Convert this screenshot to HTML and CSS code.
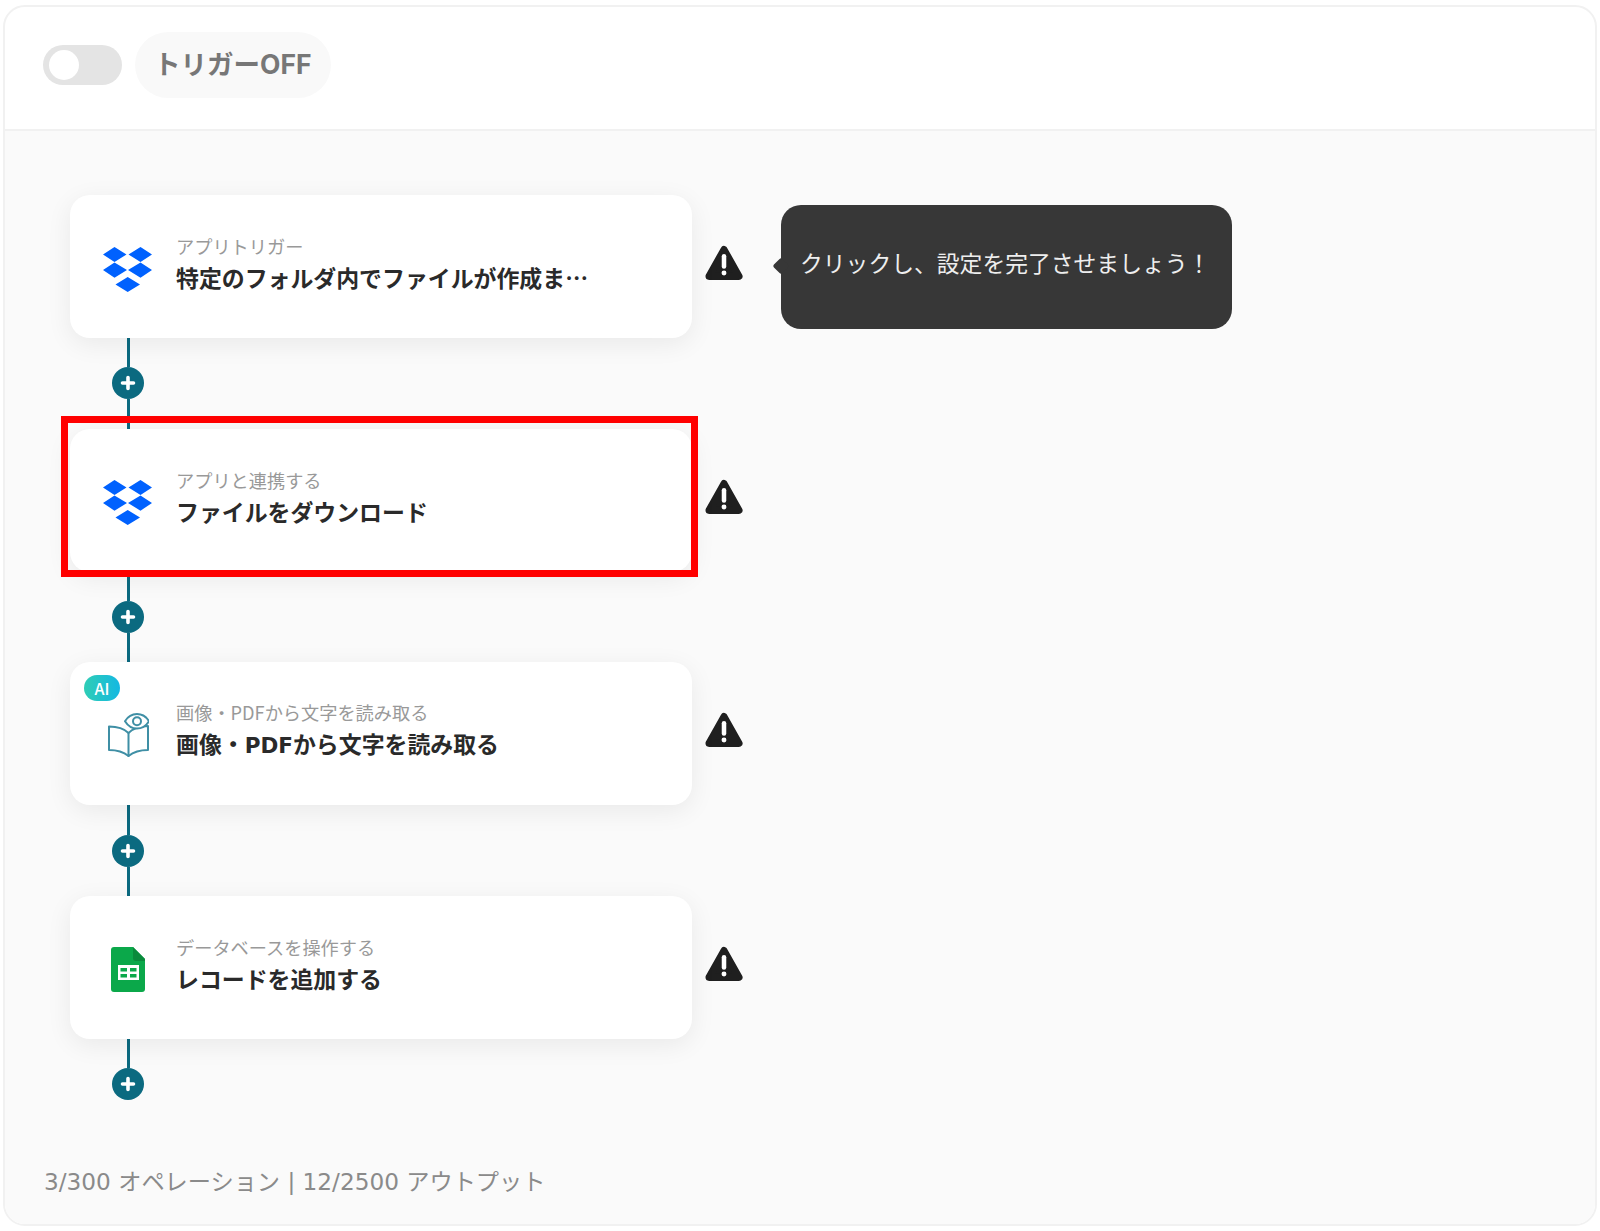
FILE: index.html
```html
<!DOCTYPE html>
<html lang="ja">
<head>
<meta charset="utf-8">
<title>フロー</title>
<link rel="stylesheet" href="styles.css">
</head>
<body>
<svg class="defs" width="0" height="0" aria-hidden="true">
  <symbol id="dropbox" viewBox="0 0 50 45">
    <path d="M11.5 0 L23.5 7.4 L11.5 15 L0 7.4 Z M37.5 0 L49 7.4 L37.5 15 L25.5 7.4 Z M11.5 15.6 L24 23 L11.5 30.7 L0 23 Z M37.5 15.6 L49 23 L37.5 30.7 L25 23 Z M24.7 30 L37 37.6 L24.7 45 L12.5 37.6 Z" fill="#0061fe"/>
  </symbol>
  <symbol id="warn" viewBox="0 0 38 35">
    <path d="M19 4.5 L33.5 30.5 H4.5 Z" fill="#1f1f1f" stroke="#1f1f1f" stroke-width="7" stroke-linejoin="round"/>
    <path d="M19 11 V21" stroke="#fff" stroke-width="4.4" stroke-linecap="round" fill="none"/>
    <circle cx="19" cy="27.2" r="2.4" fill="#fff"/>
  </symbol>
  <symbol id="plus" viewBox="0 0 32 32">
    <circle cx="16" cy="16" r="16" fill="#0b6a80"/>
    <path d="M16 10.5 V21.5 M10.5 16 H21.5" stroke="#fff" stroke-width="3.6" stroke-linecap="round"/>
  </symbol>
</svg>
<main class="frame">
  <header class="topbar">
    <div class="toggle"><span class="knob"></span></div>
    <div class="trigger-pill">トリガーOFF</div>
  </header>
  <section class="canvas">
    <div class="flow">
      <div class="step">
        <div class="card">
          <svg class="icon-dropbox"><use href="#dropbox"/></svg>
          <div class="card-text">
            <div class="card-label">アプリトリガー</div>
            <div class="card-title">特定のフォルダ内でファイルが作成ま…</div>
          </div>
        </div>
        <svg class="warn"><use href="#warn"/></svg>
        <div class="tooltip">クリックし、設定を完了させましょう！</div>
      </div>
      <div class="connector"><span class="line"></span><svg class="plus"><use href="#plus"/></svg><span class="line"></span></div>
      <div class="step">
        <div class="card">
          <svg class="icon-dropbox"><use href="#dropbox"/></svg>
          <div class="card-text">
            <div class="card-label">アプリと連携する</div>
            <div class="card-title">ファイルをダウンロード</div>
          </div>
          <div class="highlight"></div>
        </div>
        <svg class="warn"><use href="#warn"/></svg>
      </div>
      <div class="connector"><span class="line"></span><svg class="plus"><use href="#plus"/></svg><span class="line"></span></div>
      <div class="step">
        <div class="card">
          <span class="ai-badge">AI</span>
          <svg class="icon-book" viewBox="0 0 41 44" fill="none" stroke="#3f8fa5" stroke-width="2" stroke-linejoin="round" stroke-linecap="round">
            <path d="M20.5 20 C16 15.5 8 13.5 1 13.5 V37 C8 37 15 38.5 20.5 43 C26 38.5 33 37 40 37 V13 C33 13 25 15.5 20.5 20 Z"/>
            <path d="M20.5 20 V43"/>
            <path d="M17 8.2 C20 3.3 24 1 29 1 C34 1 38 3.3 41 8.2 C38 13 34 15.5 29 15.5 C24 15.5 20 13 17 8.2 Z" fill="#fff" stroke-width="2"/>
            <circle cx="29" cy="8.2" r="4" stroke-width="2"/>
          </svg>
          <div class="card-text">
            <div class="card-label">画像・PDFから文字を読み取る</div>
            <div class="card-title">画像・<span class="latin">PDF</span>から文字を読み取る</div>
          </div>
        </div>
        <svg class="warn"><use href="#warn"/></svg>
      </div>
      <div class="connector"><span class="line"></span><svg class="plus"><use href="#plus"/></svg><span class="line"></span></div>
      <div class="step">
        <div class="card">
          <svg class="icon-sheets" viewBox="0 0 34 45">
            <path d="M3 0 H22 L34 12 V42 A3 3 0 0 1 31 45 H3 A3 3 0 0 1 0 42 V3 A3 3 0 0 1 3 0 Z" fill="#0ba84a"/>
            <path d="M22 0 L34 12 V14 H25 A3 3 0 0 1 22 11 Z" fill="#0a8a3c"/>
            <path d="M7 18 H28 V33 H7 Z" fill="#fff"/>
            <path d="M9.5 21 H16 V24.5 H9.5 Z M19 21 H25.5 V24.5 H19 Z M9.5 27 H16 V30.5 H9.5 Z M19 27 H25.5 V30.5 H19 Z" fill="#0ba84a"/>
          </svg>
          <div class="card-text">
            <div class="card-label">データベースを操作する</div>
            <div class="card-title">レコードを追加する</div>
          </div>
        </div>
        <svg class="warn"><use href="#warn"/></svg>
      </div>
      <div class="connector last"><span class="line"></span><svg class="plus"><use href="#plus"/></svg></div>
    </div>
    <footer class="usage">3/300 オペレーション | 12/2500 アウトプット</footer>
  </section>
</main>
</body>
</html>
```

FILE: styles.css
```css
* { box-sizing: border-box; }
html, body { margin: 0; padding: 0; background: #fff; }
body {
  padding: 5px 3px 5px;
  font-family: "Noto Sans CJK JP", "Noto Sans", sans-serif;
}
.defs { position: absolute; }
.frame {
  height: 1221px;
  border: 2px solid #f1f1f1;
  border-radius: 22px;
  overflow: hidden;
  display: flex;
  flex-direction: column;
  background: #fff;
}
.topbar {
  height: 125px;
  flex: none;
  display: flex;
  align-items: center;
  gap: 13px;
  padding: 0 0 6px 38px;
  border-bottom: 2px solid #f1f1f1;
  margin-top: -1px;
}
.toggle {
  width: 79px;
  height: 40px;
  border-radius: 20px;
  background: #e4e4e4;
  display: flex;
  align-items: center;
  padding-left: 6px;
}
.knob {
  width: 30px;
  height: 30px;
  border-radius: 50%;
  background: #fff;
}
.trigger-pill {
  height: 66px;
  padding: 0 19px 5px;
  display: flex;
  align-items: center;
  border-radius: 33px;
  background: #f9f9f9;
  color: #777;
  font-family: "Inter", "Noto Sans CJK JP", sans-serif;
  font-size: 26.5px;
  font-weight: 700;
}
.canvas {
  flex: 1;
  display: flex;
  flex-direction: column;
  background: #fafafa;
  padding: 64px 0 26px 65px;
}
.flow { display: flex; flex-direction: column; }
.step {
  display: flex;
  align-items: center;
  height: 143px;
}
.card {
  position: relative;
  width: 622px;
  height: 143px;
  flex: none;
  display: flex;
  align-items: center;
  background: #fff;
  border-radius: 20px;
  box-shadow: 0 6px 26px rgba(0, 0, 0, 0.07);
  z-index: 1;
}
.icon-dropbox {
  width: 50px;
  height: 45px;
  margin: 5px 23px 0 33px;
  flex: none;
}
.icon-book {
  width: 41px;
  height: 44px;
  margin: 3px 27px 0 38px;
  flex: none;
}
.icon-sheets {
  width: 34px;
  height: 45px;
  margin: 5px 31px 0 41px;
  flex: none;
}
.card-text { margin-bottom: 9px; white-space: nowrap; }
.card-label {
  font-size: 18.2px;
  line-height: 30px;
  color: #999;
}
.card-title {
  font-size: 22.9px;
  line-height: 32px;
  font-weight: 700;
  color: #2a2a2a;
}
.latin { font-family: "DejaVu Sans", sans-serif; font-size: 21.5px; }
.highlight {
  position: absolute;
  left: -9px;
  top: -13px;
  right: -6px;
  bottom: -5px;
  border: 7px solid #ff0000;
}
.ai-badge {
  position: absolute;
  left: 14px;
  top: 13px;
  width: 36px;
  height: 26px;
  border-radius: 13px;
  background: linear-gradient(90deg, #2fcdb5, #14b8e2);
  color: #fff;
  font-size: 16px;
  font-weight: 500;
  line-height: 26px;
  text-align: center;
}
.warn {
  width: 40px;
  height: 36px;
  flex: none;
  margin: 0 0 7px 12px;
}
.tooltip {
  position: relative;
  width: 451px;
  height: 124px;
  margin-left: 37px;
  padding: 0 0 8px 19px;
  display: flex;
  align-items: center;
  background: #373737;
  border-radius: 20px;
  color: #eee;
  font-size: 22.8px;
  white-space: nowrap;
}
.tooltip::before {
  content: "";
  position: absolute;
  left: -6px;
  top: 55px;
  width: 12px;
  height: 12px;
  background: #373737;
  border-radius: 2px;
  transform: rotate(45deg);
}
.connector {
  height: 90.67px;
  width: 33px;
  margin-left: 41px;
  display: flex;
  flex-direction: column;
  align-items: center;
}
.connector.last { height: 61px; }
.line {
  flex: 1;
  width: 3px;
  margin-left: 2px;
  background: #0b6a80;
}
.connector.last .line { flex: none; height: 29px; }
.plus {
  width: 32px;
  height: 32px;
  flex: none;
}
.usage {
  margin-top: auto;
  font-family: "DejaVu Sans", "Noto Sans CJK JP", sans-serif;
  font-size: 23.2px;
  line-height: 32px;
  color: #8a8a8a;
  margin-left: -26px;
  white-space: nowrap;
}
```
